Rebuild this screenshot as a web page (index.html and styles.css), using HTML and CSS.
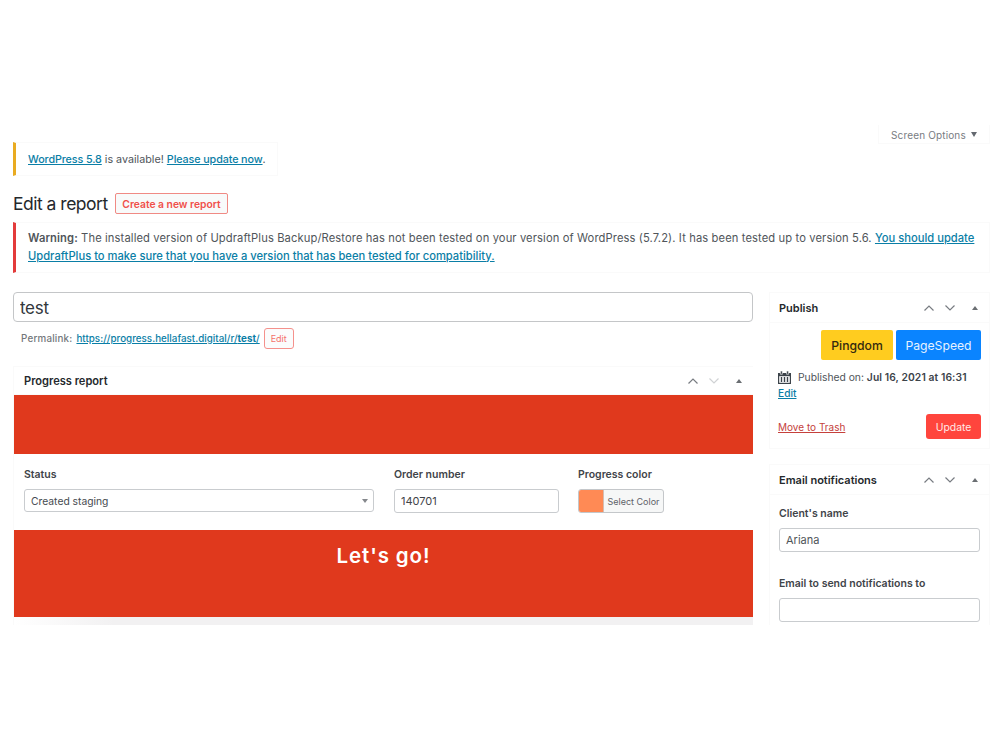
FILE: index.html
```html
<!DOCTYPE html>
<html lang="en">
<head>
    <meta charset="UTF-8">
    <meta name="viewport" content="width=device-width, initial-scale=1.0">
    <title>Edit a report</title>
    <link rel="stylesheet" href="styles.css">
</head>
<body>
    <div class="wrap">
        <div class="screen-meta">
            <button type="button" class="screen-options">Screen Options <span class="arrow-down"></span></button>
        </div>

        <div class="notice update-nag"><p><a href="#">WordPress 5.8</a> is available! <a href="#">Please update now</a>.</p></div>

        <div class="heading">
            <h1>Edit a report</h1>
            <a href="#" class="title-action">Create a new report</a>
        </div>

        <div class="notice notice-error">
            <p><strong>Warning:</strong> The installed version of UpdraftPlus Backup/Restore has not been tested on your version of WordPress (5.7.2). It has been tested up to version 5.6. <a href="#">You should update<br>UpdraftPlus to make sure that you have a version that has been tested for compatibility.</a></p>
        </div>

        <div class="columns">
            <div class="main">
                <input type="text" class="post-title" value="test">
                <div class="permalink">
                    <span class="permalink-label">Permalink:</span>
                    <a href="#">https://progress.hellafast.digital/r/<b>test</b>/</a>
                    <button type="button" class="edit-slug">Edit</button>
                </div>

                <div class="postbox progress">
                    <div class="postbox-header">
                        <h2>Progress report</h2>
                        <svg class="chevron" viewBox="0 0 12 8"><path d="M1.5 6.5 6 2l4.5 4.5"/></svg>
                        <svg class="chevron disabled" viewBox="0 0 12 8"><path d="M1.5 1.5 6 6l4.5-4.5"/></svg>
                        <span class="toggle"></span>
                    </div>
                    <div class="banner"></div>
                    <div class="fields">
                        <div class="field field-status">
                            <label>Status</label>
                            <div class="select">Created staging <span class="caret"></span></div>
                        </div>
                        <div class="field field-order">
                            <label>Order number</label>
                            <input type="text" value="140701">
                        </div>
                        <div class="field">
                            <label>Progress color</label>
                            <button type="button" class="color-picker"><span class="swatch"></span><span class="color-text">Select Color</span></button>
                        </div>
                    </div>
                    <div class="banner banner-text">Let's go!</div>
                    <div class="strip"></div>
                </div>
            </div>

            <div class="side">
                <div class="postbox publish">
                    <div class="postbox-header">
                        <h2>Publish</h2>
                        <svg class="chevron" viewBox="0 0 12 8"><path d="M1.5 6.5 6 2l4.5 4.5"/></svg>
                        <svg class="chevron" viewBox="0 0 12 8"><path d="M1.5 1.5 6 6l4.5-4.5"/></svg>
                        <span class="toggle"></span>
                    </div>
                    <div class="tools">
                        <button type="button" class="pingdom">Pingdom</button>
                        <button type="button" class="pagespeed">PageSpeed</button>
                    </div>
                    <div class="published">
                        <svg class="calendar" viewBox="0 0 13 13">
                            <path d="M0 2h13v11H0z" fill="#3c434a"/>
                            <path d="M1.2 5.2h10.6v6.6H1.2z" fill="#fff"/>
                            <path d="M2.4 0h2v3.3h-2zM8.6 0h2v3.3h-2z" fill="#3c434a" stroke="#fff" stroke-width=".6"/>
                            <path d="M3.5 6v5M6.5 6v5M9.5 6v5" stroke="#3c434a" stroke-width="1.4"/>
                        </svg>
                        <span>Published on: <b>Jul 16, 2021 at 16:31</b></span>
                    </div>
                    <a href="#" class="edit-date">Edit</a>
                    <div class="actions">
                        <a href="#" class="trash">Move to Trash</a>
                        <button type="button" class="update">Update</button>
                    </div>
                </div>

                <div class="postbox email">
                    <div class="postbox-header">
                        <h2>Email notifications</h2>
                        <svg class="chevron" viewBox="0 0 12 8"><path d="M1.5 6.5 6 2l4.5 4.5"/></svg>
                        <svg class="chevron" viewBox="0 0 12 8"><path d="M1.5 1.5 6 6l4.5-4.5"/></svg>
                        <span class="toggle"></span>
                    </div>
                    <div class="field">
                        <label>Client's name</label>
                        <input type="text" value="Ariana">
                    </div>
                    <div class="field">
                        <label>Email to send notifications to</label>
                        <input type="text">
                    </div>
                </div>
            </div>
        </div>
    </div>
</body>
</html>
```
FILE: styles.css
```css
* {
    box-sizing: border-box;
}
body {
    margin: 0;
    background: #fff;
    color: #50555a;
    font-family: Inter, "Liberation Sans", sans-serif;
    font-size: 11px;
}
p, h1, h2 {
    margin: 0;
}
a {
    color: #0a7ea6;
    text-decoration: underline;
}
input, button {
    font-family: inherit;
    margin: 0;
}
.wrap {
    height: 500px;
    margin-top: 125px;
    padding: 0 10px 0 13px;
    overflow: hidden;
}

/* top bar and notices */
.screen-meta {
    display: flex;
    justify-content: flex-end;
    height: 17px;
}
.screen-options {
    display: flex;
    align-items: center;
    gap: 5px;
    width: 112px;
    height: 19px;
    padding: 1px 0 0 12px;
    border: 1px solid #fafafa;
    border-top: 0;
    background: #fff;
    color: #787c82;
    font-size: 10px;
    letter-spacing: 0.15px;
    white-space: nowrap;
}
.arrow-down {
    border: 3px solid transparent;
    border-top: 5px solid #646970;
    border-bottom: 0;
}
.notice {
    border: 1px solid #fafafa;
    border-left: 3px solid #e9ab21;
}
.update-nag {
    width: 265px;
    height: 34px;
    padding-left: 12px;
    line-height: 34px;
    font-size: 10.75px;
    white-space: nowrap;
}
.update-nag a {
    font-weight: 500;
    letter-spacing: -0.1px;
}
.heading {
    display: flex;
    align-items: center;
    gap: 7px;
    height: 21px;
    margin: 17px 0 8px;
}
h1 {
    width: 95px;
    color: #24282c;
    font-size: 17.5px;
    font-weight: 400;
    letter-spacing: -0.5px;
    white-space: nowrap;
}
.title-action {
    width: 113px;
    height: 21px;
    border: 1px solid #f08a84;
    border-radius: 2px;
    background: #f8fafa;
    color: #f0504a;
    font-size: 10.3px;
    font-weight: 600;
    line-height: 20px;
    text-align: center;
    text-decoration: none;
    white-space: nowrap;
}
.notice-error {
    height: 51px;
    padding: 7px 0 0 12px;
    border-left-color: #e33b3b;
    line-height: 17.5px;
    font-size: 11.2px;
    letter-spacing: 0.11px;
    white-space: nowrap;
}
.notice-error a {
    font-weight: 500;
    letter-spacing: 0;
}
.notice-error strong {
    font-weight: 600;
}

/* columns */
.columns {
    display: flex;
    gap: 16px;
    margin-top: 19px;
}
.main {
    width: 740px;
}
.side {
    width: 221px;
}
.post-title {
    display: block;
    width: 740px;
    height: 30px;
    padding: 1px 6px 0;
    border: 1px solid #c4c6c8;
    border-radius: 4px;
    color: #32373c;
    font-size: 17px;
    letter-spacing: -0.3px;
}
.permalink {
    display: flex;
    align-items: center;
    gap: 4px;
    height: 21px;
    margin: 6px 0 17px;
    padding-left: 8px;
    font-size: 9.8px;
    white-space: nowrap;
}
.permalink-label {
    font-weight: 500;
    color: #73777b;
    letter-spacing: 0.2px;
}
.permalink a {
    font-weight: 500;
    letter-spacing: 0.02px;
}
.permalink b {
    font-weight: 700;
}
.edit-slug {
    width: 30px;
    height: 21px;
    padding: 0;
    border: 1px solid #f5918c;
    border-radius: 3px;
    background: #fbfcfc;
    color: #f5716b;
    font-size: 9px;
}

.postbox {
    border: 1px solid #fafafa;
}
.postbox-header {
    display: flex;
    align-items: center;
    height: 28px;
    padding: 0 11px 0 9px;
    border-bottom: 1px solid #fafafa;
}
h2 {
    flex: 1;
    color: #24282c;
    font-size: 11px;
    font-weight: 600;
    white-space: nowrap;
}
.chevron {
    width: 12px;
    height: 8px;
    margin-right: 9px;
    fill: none;
    stroke: #787c82;
    stroke-width: 1.2;
}
.chevron.disabled {
    stroke: #d0d2d4;
}
.toggle {
    margin-left: 7px;
    border: 3px solid transparent;
    border-top: 0;
    border-bottom: 4px solid #6a6e72;
}

/* progress report */
.progress {
    border-right: 0;
}
.progress h2 {
    padding-left: 1px;
    font-size: 11.1px;
}
.banner {
    height: 59px;
    background: #e0391d;
}
.banner-text {
    height: 87px;
    padding-top: 12px;
    color: #fff;
    font-size: 20.5px;
    font-weight: 600;
    letter-spacing: 0.9px;
    line-height: 27px;
    text-align: center;
}
.fields {
    display: flex;
    gap: 20px;
    height: 76px;
    padding: 14px 0 0 10px;
}
.field label {
    display: block;
    height: 14px;
    margin-bottom: 7px;
    color: #3f4449;
    font-size: 10.5px;
    font-weight: 600;
    line-height: 14px;
    white-space: nowrap;
}
.field input, .select {
    display: flex;
    align-items: center;
    justify-content: space-between;
    width: 100%;
    height: 24px;
    padding: 0 6px;
    border: 1px solid #c9cccf;
    border-radius: 3px;
    background: #fff;
    color: #50555a;
    font-size: 11px;
}
.field-status {
    width: 350px;
}
.field-status .select {
    height: 23px;
    padding: 1px 5px 0 6px;
    color: #464b50;
    font-size: 10.3px;
}
.field-order {
    width: 165px;
}
.field-order input {
    color: #3f4449;
}
.field-order + .field {
    margin-left: -1px;
}
.caret {
    border: 3px solid transparent;
    border-top: 4px solid #85888c;
    border-bottom: 0;
}
.color-picker {
    display: flex;
    width: 86px;
    height: 24px;
    padding: 0;
    border: 1px solid #c4c7ca;
    border-radius: 3px;
    background: #f6f7f7;
    color: #5d6267;
    font-size: 9px;
    line-height: 23px;
    overflow: hidden;
    white-space: nowrap;
}
.swatch {
    width: 25px;
    height: 22px;
    border-right: 1px solid #d5bdb2;
    background: #ff8a55;
}
.color-text {
    flex: 1;
    text-align: center;
}
.strip {
    height: 8px;
    background: linear-gradient(to right, #fff, #f2f1f2 100px);
}

/* publish box */
.publish {
    height: 157px;
    margin-bottom: 15px;
}
.side .postbox-header {
    height: 30px;
}
.tools {
    display: flex;
    justify-content: flex-end;
    gap: 3px;
    padding: 7px 8px 0 0;
}
.tools button {
    width: 72px;
    height: 30px;
    padding: 0;
    border: 0;
    border-radius: 2px;
    font-size: 12.2px;
}
.tools .pingdom {
    background: #ffcc1f;
    color: #33290f;
    font-weight: 500;
}
.tools .pagespeed {
    width: 85px;
    background: #0a84ff;
    color: #e6f2ff;
}
.published {
    display: flex;
    align-items: center;
    gap: 7px;
    height: 16px;
    margin-top: 9px;
    padding-left: 8px;
    font-size: 10.3px;
    white-space: nowrap;
}
.published b {
    color: #3c434a;
    font-weight: 600;
    letter-spacing: 0.1px;
}
.calendar {
    width: 13px;
    height: 13px;
}
.edit-date {
    display: block;
    margin-left: 8px;
    font-size: 10.2px;
    font-weight: 500;
    line-height: 16px;
}
.actions {
    display: flex;
    align-items: center;
    justify-content: space-between;
    margin-top: 13px;
    padding: 0 8px;
}
.trash {
    color: #c5413c;
    font-size: 10px;
}
.update {
    width: 55px;
    height: 25px;
    padding: 1px 0 0;
    border: 0;
    border-radius: 3px;
    background: #ff453d;
    color: #ffe9e8;
    font-size: 10.4px;
}

/* email box */
.email .field {
    height: 70px;
    padding: 12px 9px 0;
}
```
